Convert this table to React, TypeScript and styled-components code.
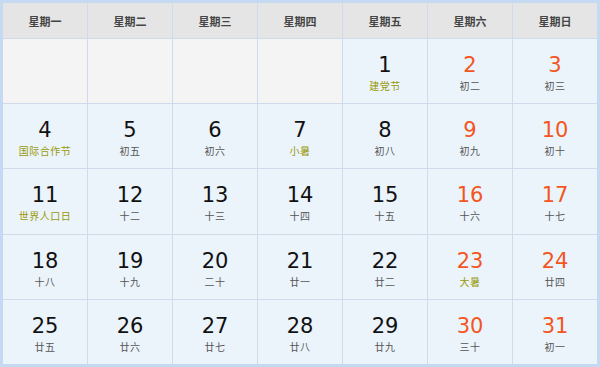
import { createGlobalStyle, styled } from 'styled-components';

const GlobalStyle = createGlobalStyle`
  html, body {
    margin: 0;
    padding: 0;
    background: #ffffff;
  }
`;

const Calendar = styled.div`
  width: 600px;
  height: 367px;
  box-sizing: border-box;
  border: 3px solid #c6d9f3;
  background: #cfdbea;
  display: grid;
  grid-template-columns: repeat(7, 1fr);
  grid-template-rows: 35px repeat(5, 1fr);
  gap: 1px;
  font-family: 'Noto Sans CJK SC', 'DejaVu Sans', sans-serif;
`;

const HeadCell = styled.div`
  background: #e5e5e5;
  display: flex;
  align-items: center;
  justify-content: center;
  font-size: 11px;
  font-weight: 700;
  color: #444;
`;

const DayCell = styled.div<{ $empty?: boolean }>`
  background: ${(p) => (p.$empty ? '#f4f4f4' : '#ebf3fb')};
  display: flex;
  flex-direction: column;
  align-items: center;
  padding-top: 13px;
  box-sizing: border-box;
`;

const Num = styled.div<{ $weekend?: boolean }>`
  font-family: 'DejaVu Sans', Verdana, sans-serif;
  font-size: 21px;
  line-height: 26px;
  color: ${(p) => (p.$weekend ? '#f3561f' : '#111')};
`;

const Lunar = styled.div<{ $fest?: boolean }>`
  font-size: 10px;
  line-height: 16px;
  letter-spacing: 0.5px;
  color: ${(p) => (p.$fest ? '#999a0a' : '#555')};
`;

const weekNames = ['星期一', '星期二', '星期三', '星期四', '星期五', '星期六', '星期日'];

type Day = { n: number; text: string; fest?: boolean };

const days: Day[] = [
  { n: 1, text: '建党节', fest: true },
  { n: 2, text: '初二' },
  { n: 3, text: '初三' },
  { n: 4, text: '国际合作节', fest: true },
  { n: 5, text: '初五' },
  { n: 6, text: '初六' },
  { n: 7, text: '小暑', fest: true },
  { n: 8, text: '初八' },
  { n: 9, text: '初九' },
  { n: 10, text: '初十' },
  { n: 11, text: '世界人口日', fest: true },
  { n: 12, text: '十二' },
  { n: 13, text: '十三' },
  { n: 14, text: '十四' },
  { n: 15, text: '十五' },
  { n: 16, text: '十六' },
  { n: 17, text: '十七' },
  { n: 18, text: '十八' },
  { n: 19, text: '十九' },
  { n: 20, text: '二十' },
  { n: 21, text: '廿一' },
  { n: 22, text: '廿二' },
  { n: 23, text: '大暑', fest: true },
  { n: 24, text: '廿四' },
  { n: 25, text: '廿五' },
  { n: 26, text: '廿六' },
  { n: 27, text: '廿七' },
  { n: 28, text: '廿八' },
  { n: 29, text: '廿九' },
  { n: 30, text: '三十' },
  { n: 31, text: '初一' },
];

const offset = 4;

function App() {
  return (
    <>
      <GlobalStyle />
      <Calendar>
        {weekNames.map((w) => (
          <HeadCell key={w}>{w}</HeadCell>
        ))}
        {Array.from({ length: offset }).map((_, i) => (
          <DayCell key={'e' + i} $empty />
        ))}
        {days.map((d, i) => {
          const col = (i + offset) % 7;
          return (
            <DayCell key={d.n}>
              <Num $weekend={col >= 5}>{d.n}</Num>
              <Lunar $fest={d.fest}>{d.text}</Lunar>
            </DayCell>
          );
        })}
      </Calendar>
    </>
  );
}

export default App;
